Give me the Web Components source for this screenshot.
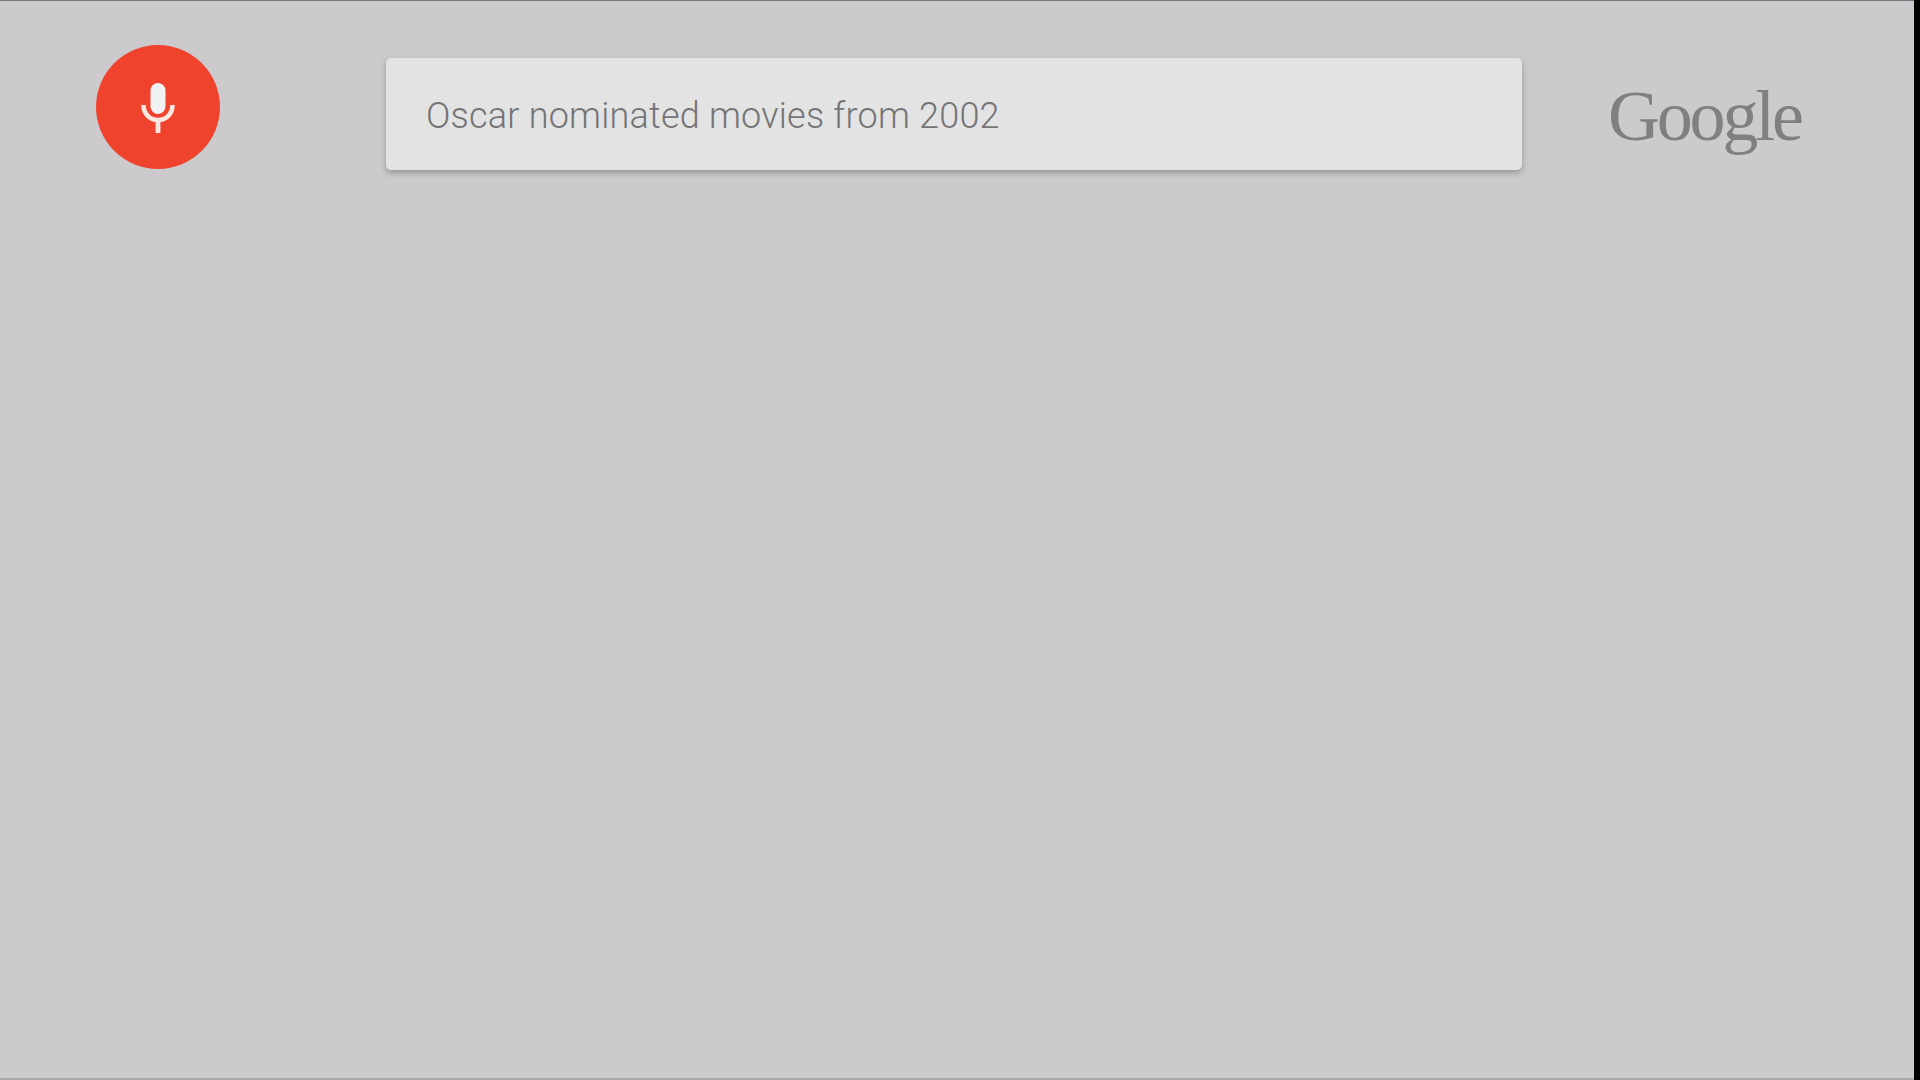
<!DOCTYPE html>
<html>
<head>
<meta charset="utf-8">
<title>Voice search</title>
<style>
  html, body { margin: 0; height: 100%; background: #000; }
</style>
</head>
<body>
<search-screen>
  <mic-button slot="mic"></mic-button>
  <search-box slot="box">Oscar nominated movies from 2002</search-box>
  <google-mark slot="logo"></google-mark>
</search-screen>

<script>
class SearchScreen extends HTMLElement {
  constructor() {
    super();
    this.attachShadow({ mode: 'open' });
    this.shadowRoot.innerHTML = `
      <style>
        :host {
          display: block;
          width: 1914px;
          height: 1080px;
          box-sizing: border-box;
          background: #cccacd;
          border-top: 1px solid #77767a;
          border-bottom: 2px solid #a9a8ab;
        }
        .top {
          display: flex;
          align-items: flex-start;
          padding: 44px 0 0 96px;
        }
        .mic { display: block; width: 290px; }
        .box { display: block; width: 1136px; margin-top: 13px; }
        .logo { display: block; margin-left: 86px; margin-top: 26px; }
      </style>
      <div class="top">
        <div class="mic"><slot name="mic"></slot></div>
        <div class="box"><slot name="box"></slot></div>
        <div class="logo"><slot name="logo"></slot></div>
      </div>
    `;
  }
}

class MicButton extends HTMLElement {
  constructor() {
    super();
    this.attachShadow({ mode: 'open' });
    this.shadowRoot.innerHTML = `
      <style>
        :host {
          display: flex;
          align-items: center;
          justify-content: center;
          width: 124px;
          height: 124px;
          border-radius: 50%;
          background: #f0432d;
        }
        svg { display: block; margin-top: 1px; }
      </style>
      <svg width="34" height="50" viewBox="0 0 34 50">
        <rect x="9.5" y="0" width="15" height="31" rx="7.5" fill="#f0f1f3"/>
        <path d="M2.5 22 C2.5 31.5 9.5 37 17 37 C24.5 37 31.5 31.5 31.5 22" fill="none" stroke="#fbe6e0" stroke-width="4.6"/>
        <rect x="14.6" y="36" width="4.8" height="14" fill="#fbe6e0"/>
      </svg>
    `;
  }
}

class SearchBox extends HTMLElement {
  constructor() {
    super();
    this.attachShadow({ mode: 'open' });
    this.shadowRoot.innerHTML = `
      <style>
        :host {
          display: flex;
          align-items: center;
          height: 112px;
          box-sizing: border-box;
          padding: 3px 0 0 40px;
          border-radius: 5px;
          background: #e3e3e4;
          box-shadow: 0 3px 6px rgba(0, 0, 0, 0.26);
          color: #747476;
          font: 300 36px Roboto, sans-serif;
          letter-spacing: 0.22px;
          white-space: nowrap;
        }
      </style>
      <slot></slot>
    `;
  }
}

class GoogleMark extends HTMLElement {
  constructor() {
    super();
    this.attachShadow({ mode: 'open' });
    this.shadowRoot.innerHTML = `
      <style>
        :host {
          display: block;
          color: #808082;
          font: 72px/90px "Liberation Serif", serif;
          letter-spacing: -3.2px;
        }
      </style>
      Google
    `;
  }
}

customElements.define('search-screen', SearchScreen);
customElements.define('mic-button', MicButton);
customElements.define('search-box', SearchBox);
customElements.define('google-mark', GoogleMark);
</script>
</body>
</html>
